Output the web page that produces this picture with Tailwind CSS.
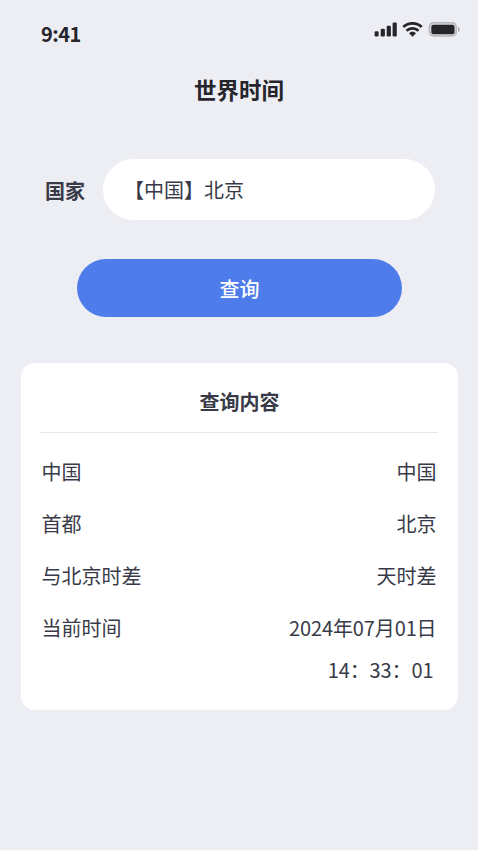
<!DOCTYPE html>
<html lang="zh-CN">
<head>
<meta charset="utf-8">
<title>世界时间</title>
<script src="https://cdn.jsdelivr.net/npm/@tailwindcss/browser@4"></script>
</head>
<body class="bg-[#edeef3]">
<div class="h-[850px] w-[478px] overflow-hidden bg-[#edeef3] font-['Noto_Sans_CJK_SC',sans-serif] text-[20px] leading-[30px] text-[#383a48]">
  <header class="flex h-[68px] justify-between pl-[41px] pr-[18px] pt-[19px]">
    <span class="font-bold tracking-[-0.5px] text-[#25252b]">9:41</span>
    <svg class="mt-[2px]" width="86" height="18" viewBox="0 0 86 18" fill="#25252b">
      <rect x=".6" y="10.200" width="4" height="5.300" rx="1.300"/><rect x="6.700" y="7.700" width="4.200" height="7.800" rx="1.300"/><rect x="12.700" y="4.700" width="4.200" height="10.800" rx="1.300"/><rect x="18.600" y="1.500" width="4.200" height="14" rx="1.300"/>
      <g fill="none" stroke="#25252b" stroke-width="2.800"><path d="M29.300 6a13.500 13.500 0 0 1 18.400 0"/><path d="M32.500 9.700a8.800 8.800 0 0 1 12 0"/></g>
      <path d="M38.500 15.700l-3.500-3.500a5.200 5.200 0 0 1 7 0z"/>
      <rect x="55.300" y="1.800" width="27" height="13.200" rx="4" fill="#d8d9de" stroke="#b4b5bb" stroke-width="1.400"/><rect x="57.300" y="3.700" width="23.200" height="9.600" rx="2"/><path d="M84 6v5q1.800-.7 1.800-2.500T84 6" fill="#a5a6aa"/>
    </svg>
  </header>
  <h1 class="mt-[4px] text-center text-[22.500px] font-bold leading-[34px] text-[#25252b]">世界时间</h1>
  <main>
    <div class="mt-[53px] flex items-center pl-[45px]">
      <label class="w-[58px] pt-[3px] font-bold">国家</label>
      <div class="flex h-[61px] w-[332px] items-center rounded-full bg-white pl-[21px] pt-px">【中国】北京</div>
    </div>
    <button class="mx-auto mt-[39px] flex h-[58px] w-[325px] items-center justify-center rounded-full bg-[#4f7ceb] pl-px pt-px font-medium text-white">查询</button>
    <section class="mx-auto mt-[46px] h-[347px] w-[437px] rounded-[14px] bg-white pl-[19px] pr-5 pt-[24px]">
      <h2 class="h-[46px] border-b border-[#e8e8ea] pl-[2px] text-center font-bold">查询内容</h2>
      <dl class="flex flex-col gap-[22px] pl-[2px] pr-px pt-[24px]">
        <div class="flex justify-between"><dt>中国</dt><dd>中国</dd></div>
        <div class="flex justify-between"><dt>首都</dt><dd>北京</dd></div>
        <div class="flex justify-between"><dt>与北京时差</dt><dd>天时差</dd></div>
        <div class="flex justify-between"><dt>当前时间</dt><dd class="tracking-[-0.12px]">2024年07月01日</dd></div>
      </dl>
      <p class="mt-[12px] pr-[4px] text-right tracking-[-0.1px]">14：33：01</p>
    </section>
  </main>
</div>
</body>
</html>
